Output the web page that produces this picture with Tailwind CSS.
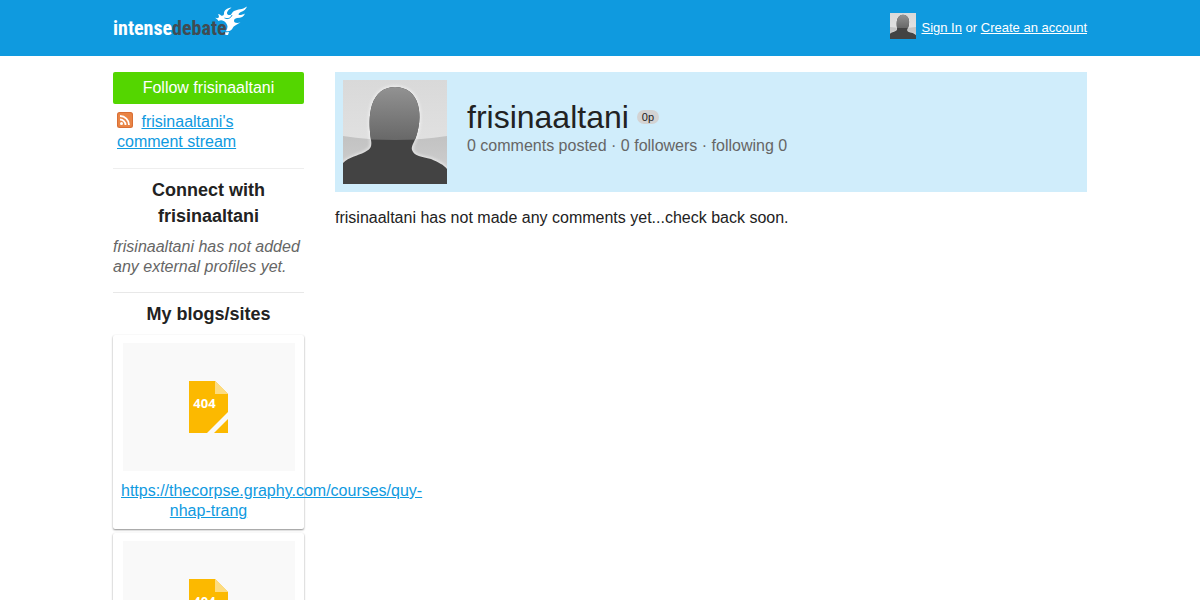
<!DOCTYPE html>
<html lang="en">
<head>
    <meta charset="UTF-8">
    <meta name="viewport" content="width=device-width, initial-scale=1.0">
    <title>frisinaaltani's Profile</title>
    <script src="https://cdn.jsdelivr.net/npm/@tailwindcss/browser@4"></script>
</head>
<body class="bg-white font-['Liberation_Sans',Arial,sans-serif] text-base leading-5 text-[#222]">
    <!-- Shared artwork -->
    <svg class="absolute size-0" aria-hidden="true">
        <defs>
            <linearGradient id="avatarBg" x1="0" y1="0" x2="0" y2="1">
                <stop offset="0" stop-color="#d9d9d9"/>
                <stop offset="1" stop-color="#e6e6e6"/>
            </linearGradient>
            <linearGradient id="avatarFloor" x1="0" y1="0" x2="0" y2="1">
                <stop offset="0" stop-color="#c2c2c2"/>
                <stop offset="1" stop-color="#d2d2d2"/>
            </linearGradient>
            <linearGradient id="avatarHead" gradientUnits="userSpaceOnUse" x1="0" y1="7" x2="0" y2="60">
                <stop offset="0" stop-color="#929292"/>
                <stop offset="1" stop-color="#686868"/>
            </linearGradient>
            <filter id="avatarGlow" x="-20%" y="-20%" width="140%" height="140%">
                <feGaussianBlur stdDeviation="1.5"/>
            </filter>
            <clipPath id="avatarTop"><path d="M0 0H104V58Q52 62 0 58Z"/></clipPath>
            <path id="avatarShape" d="M0 104V83C6 77 14 76 22 72C28 69 29 66 28 60C26 46 26 35 29 25C33 13 41 7 52 7C63 7 72 13 75 25C78 36 76 48 73 57C71 63 68 66 69 70C71 76 79 77 88 79C95 82 101 85 104 89V104Z"/>
        </defs>
        <symbol id="avatar" viewBox="0 0 104 104">
            <path fill="url(#avatarBg)" d="M0 0H104V104H0Z"/>
            <path fill="url(#avatarFloor)" d="M0 56Q52 64 104 56V104H0Z"/>
            <use href="#avatarShape" fill="#fff" stroke="#fff" stroke-width="3" filter="url(#avatarGlow)" opacity=".5"/>
            <use href="#avatarShape" fill="#434343"/>
            <use href="#avatarShape" fill="url(#avatarHead)" clip-path="url(#avatarTop)"/>
        </symbol>
        <symbol id="missing" viewBox="0 0 172 128">
            <path fill="#fcb900" d="M66 38H92L105 51V69L84 90H66Z"/>
            <path fill="#fddc80" d="M92 38L105 51H92Z"/>
            <path fill="#fcb900" d="M105 76V90H91Z"/>
            <text x="81.5" y="65" text-anchor="middle" font-family="Open Sans, sans-serif" font-size="13" font-weight="700" fill="#fff">404</text>
        </symbol>
    </svg>

    <header class="h-14 bg-[#0f9adf]">
        <div class="mx-auto flex max-w-[974px] items-start justify-between">
            <a href="#" class="relative flex pt-4 font-['Roboto_Condensed','Open_Sans_Condensed',sans-serif] text-xl leading-6 font-bold text-white" aria-label="IntenseDebate">
                <span>intense</span><span class="text-[#414b52]">debate</span>
                <svg class="absolute top-1.5 left-[102px] h-8 w-8" viewBox="0 0 32 32" fill="#fff" aria-hidden="true">
                    <path d="M32 .5C27 4 23 3 19 5C16 7 17 9 14.500 9C12 9 11.500 7 12.500 5.500C13.500 3.500 15 3 16.500 1.500C12 2 9 4 9 7.500C9 9.500 7.500 10 6 9.500C5 8.500 4 8 3 8.500C4.500 10 4 11.500 3 12C2 12.500 1 11.500 .5 12C2 13 3 14 3.500 15C6 13.500 9 14.500 11 17C13 19.500 13 22 11 25C14 26 17 24 18 21.500C19 20 20 20 21 19C23 18 24 17 25.500 16.500C22 17.500 19 17 19 15C19 13 20 12.500 22 12C26 12 29 10.500 30 7.500C27 9 24.500 9.500 23.500 8.500C24 5.500 30 6 32 .5Z"/>
                    <path fill="none" stroke="#0f9adf" d="M9.500 12C13 13.500 16 12 17 9"/>
                    <path d="M10 26.500L14 26L13 29H10.500Z"/>
                </svg>
            </a>
            <div class="flex gap-[5px] pt-[13px] text-[13px] text-white">
                <svg class="size-[26px]" aria-hidden="true"><use href="#avatar"/></svg>
                <p class="pt-[5px]"><a href="#" class="underline">Sign In</a> or <a href="#" class="underline">Create an account</a></p>
            </div>
        </div>
    </header>

    <div class="mx-auto flex max-w-[974px] items-start gap-[31px] pt-4">
        <aside class="w-[191px] shrink-0">
            <button type="button" class="h-8 w-full rounded-xs bg-[#54d600] text-white">Follow frisinaaltani</button>
            <p class="border-b border-[#eee] px-1 pt-2 pb-4">
                <svg class="mr-1 inline-block size-4 align-[-1px]" viewBox="0 0 16 16" aria-hidden="true">
                    <rect width="16" height="16" rx="2.5" fill="#d96f35"/>
                    <rect x="1" y="1" width="14" height="14" rx="2" fill="#e98445"/>
                    <g fill="none" stroke="#fff" stroke-width="1.8">
                        <path d="M3 7.5a5.5 5.5 0 0 1 5.5 5.5M3 4a9 9 0 0 1 9 9"/>
                    </g>
                    <circle cx="4.5" cy="11.5" r="1.5" fill="#fff"/>
                </svg>
                <a href="#" class="text-[#0f9adf] underline">frisinaaltani's comment stream</a>
            </p>

            <section class="border-b border-[#e8e8e8] pt-2 pb-[15px]">
                <h2 class="mb-2 text-center text-lg leading-[26px] font-bold">Connect with frisinaaltani</h2>
                <p class="text-[#666] italic">frisinaaltani has not added any external profiles yet.</p>
            </section>

            <section class="pt-2">
                <h2 class="mb-2 text-center text-lg leading-[26px] font-bold">My blogs/sites</h2>
                <ul class="space-y-1">
                    <li class="rounded-xs p-2 text-center shadow-[0_1px_2px_rgba(0,0,0,0.45)]">
                        <svg class="mx-auto mb-2.5 block h-32 w-[172px] bg-[#f9f9f9]" role="img" aria-label="Not found"><use href="#missing"/></svg>
                        <a href="#" class="block whitespace-nowrap text-[#0f9adf] underline">https://thecorpse.graphy.com/courses/quy-<br>nhap-trang</a>
                    </li>
                    <li class="rounded-xs p-2 text-center shadow-[0_1px_2px_rgba(0,0,0,0.45)]">
                        <svg class="mx-auto mb-2.5 block h-32 w-[172px] bg-[#f9f9f9]" role="img" aria-label="Not found"><use href="#missing"/></svg>
                    </li>
                </ul>
            </section>
        </aside>

        <main class="min-w-0 flex-1">
            <div class="flex gap-5 bg-[#d0edfb] p-2">
                <svg class="size-[104px] shrink-0" role="img" aria-label="frisinaaltani"><use href="#avatar"/></svg>
                <div class="pt-[18px]">
                    <div class="flex items-center gap-2">
                        <h1 class="text-[32px] leading-[38px]">frisinaaltani</h1>
                        <span class="rounded-full bg-[#d3d3d3] px-[5px] text-[11px] leading-[14px]">0p</span>
                    </div>
                    <p class="text-[#666]">0 comments posted · 0 followers · following 0</p>
                </div>
            </div>
            <p class="mt-4">frisinaaltani has not made any comments yet...check back soon.</p>
        </main>
    </div>
</body>
</html>
